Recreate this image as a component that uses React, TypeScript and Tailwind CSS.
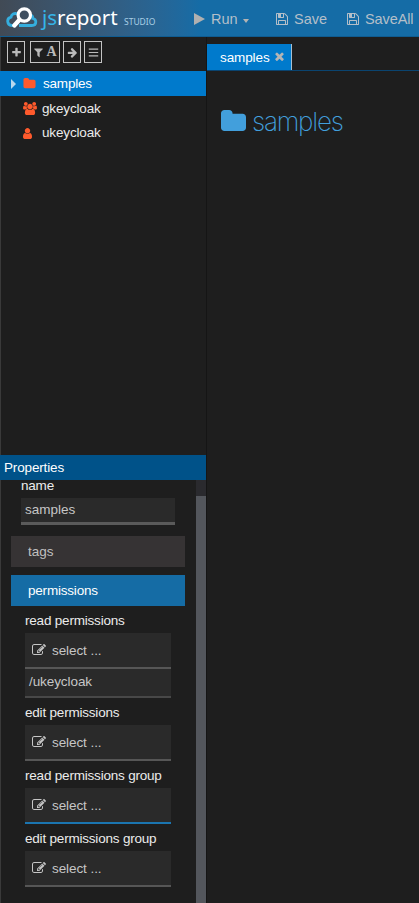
import React from "react";

const PATHS = {
  floppy:
    "M512 1536h768v-384h-768v384zm896 0h128v-896q0-14-10-38.5t-20-34.5l-281-281q-10-10-34-20t-39-10v416q0 40-28 68t-68 28h-576q-40 0-68-28t-28-68v-416h-128v1280h128v-416q0-40 28-68t68-28h832q40 0 68 28t28 68v416zm-384-928v-320q0-13-9.5-22.5t-22.5-9.5h-192q-13 0-22.5 9.5t-9.5 22.5v320q0 13 9.5 22.5t22.5 9.5h192q13 0 22.5-9.5t9.5-22.5zm640 32v928q0 40-28 68t-68 28h-1344q-40 0-68-28t-28-68v-1344q0-40 28-68t68-28h928q40 0 88 20t76 48l280 280q28 28 48 76t20 88z",
  edit:
    "M888 1184l116-116-152-152-116 116v56h96v96h56zm440-720q-16-16-33 1l-350 350q-17 17-1 33t33-1l350-350q17-17 1-33zm80 594v190q0 119-84.5 203.5t-203.5 84.5h-832q-119 0-203.5-84.5t-84.5-203.5v-832q0-119 84.5-203.5t203.5-84.5h832q63 0 117 25 15 7 18 23 3 17-9 29l-49 49q-14 14-32 8-23-6-45-6h-832q-66 0-113 47t-47 113v832q0 66 47 113t113 47h832q66 0 113-47t47-113v-126q0-13 9-22l64-64q15-15 35-7t20 29zm-96-738l288 288-672 672h-288v-288zm444 132l-92 92-288-288 92-92q28-28 68-28t68 28l152 152q28 28 28 68t-28 68z",
  folder:
    "M1728 608v704q0 92-66 158t-158 66h-1216q-92 0-158-66t-66-158v-960q0-92 66-158t158-66h320q92 0 158 66t66 158v32h672q92 0 158 66t66 158z",
  plus:
    "M1600 736v192q0 40-28 68t-68 28h-416v416q0 40-28 68t-68 28h-192q-40 0-68-28t-28-68v-416h-416q-40 0-68-28t-28-68v-192q0-40 28-68t68-28h416v-416q0-40 28-68t68-28h192q40 0 68 28t28 68v416h416q40 0 68 28t28 68z",
  filter:
    "M1595 295q17 41-14 70l-493 493v742q0 42-39 59-13 5-25 5-27 0-45-19l-256-256q-19-19-19-45v-486l-493-493q-31-29-14-70 17-39 59-39h1280q42 0 59 39z",
  arrow:
    "M1600 960q0 54-37 91l-651 651q-39 37-91 37-51 0-90-37l-75-75q-38-38-38-91t38-91l293-293h-704q-52 0-84.5-37.5t-32.5-90.5v-128q0-53 32.5-90.5t84.5-37.5h704l-293-294q-38-36-38-90t38-90l75-75q38-38 90-38 53 0 91 38l651 651q37 35 37 90z",
  bars: "M128 256h1536v190h-1536zM128 801h1536v190h-1536zM128 1346h1536v190h-1536z",
  times:
    "M1490 1322q0 40-28 68l-136 136q-28 28-68 28t-68-28l-294-294-294 294q-28 28-68 28t-68-28l-136-136q-28-28-28-68t28-68l294-294-294-294q-28-28-28-68t28-68l136-136q28-28 68-28t68 28l294 294 294-294q28-28 68-28t68 28l136 136q28 28 28 68t-28 68l-294 294 294 294q28 28 28 68z",
  user:
    "M1536 1399q0 109-62.5 187t-150.5 78h-854q-88 0-150.5-78t-62.5-187q0-85 8.5-160.5t31.5-152 58.5-131 94-89 134.5-34.5q131 128 313 128t313-128q76 0 134.5 34.5t94 89 58.5 131 31.5 152 8.5 160.5zm-256-887q0 159-112.5 271.5t-271.5 112.5-271.5-112.5-112.5-271.5 112.5-271.5 271.5-112.5 271.5 112.5 112.5 271.5z",
  users:
    "M593 896q-162 5-265 128h-134q-82 0-138-40.5t-56-118.5q0-353 124-353 6 0 43.5 21t97.5 42.5 119 21.5q67 0 133-23-5 37-5 66 0 143 81 277zm1071 637q0 120-73 189.5t-194 69.5h-874q-121 0-194-69.5t-73-189.5q0-53 3.5-103.5t14-109 26.5-108.5 43-97.5 62-81 85.5-53.5 111.5-20q10 0 43 21.5t73 48 107 48 135 21.5 135-21.5 107-48 73-48 43-21.5q61 0 111.5 20t85.5 53.5 62 81 43 97.5 26.5 108.5 14 109 3.5 103.5zm-1024-1277q0 106-75 181t-181 75-181-75-75-181 75-181 181-75 181 75 75 181zm704 384q0 159-112.5 271.5t-271.5 112.5-271.5-112.5-112.5-271.5 112.5-271.5 271.5-112.5 271.5 112.5 112.5 271.5zm576 225q0 78-56 118.5t-138 40.5h-134q-103-123-265-128 81-134 81-277 0-29-5-66 66 23 133 23 59 0 119-21.5t97.5-42.5 43.5-21q124 0 124 353zm-128-609q0 106-75 181t-181 75-181-75-75-181 75-181 181-75 181 75 75 181z",
};

type IconName = keyof typeof PATHS;

function Icon({ name, className, box = "0 0 1792 1792" }: { name: IconName; className: string; box?: string }) {
  return (
    <svg viewBox={box} fill="currentColor" className={`shrink-0 ${className}`}>
      <path d={PATHS[name]} />
    </svg>
  );
}

function Logo() {
  return (
    <div className="flex h-full w-[155px] shrink-0 items-start pl-[6px]">
      <svg viewBox="0 0 32 24" className="mt-[6px] h-6 w-8 shrink-0" fill="none">
        <path
          d="M7 19.500H5.800a4.200 4.200 0 0 1-.8-8.300C5.500 8.300 8 6.800 11.500 7.800M23.500 9c2.400 0 3.500 1.500 3.300 3.500 2 .4 3 1.600 3 3.200 0 2.300-1.600 3.800-4 3.800H13"
          stroke="#35aede"
          strokeWidth="2.800"
        />
        <circle cx="18.300" cy="9" r="6.200" stroke="#fff" strokeWidth="3.200" />
        <path d="M13.300 14 8.300 19.400" stroke="#fff" strokeWidth="4.400" strokeLinecap="round" />
      </svg>
      <div className="ml-[4px] flex items-baseline whitespace-nowrap font-['Noto_Sans',sans-serif] leading-[35px] text-white">
        <span className="w-[77px] text-[20.500px]">
          <span className="text-[#35b5e8]">js</span>report
        </span>
        <span className="ml-[5px] text-[8.500px] text-[#a9cfe6]">STUDIO</span>
      </div>
    </div>
  );
}

function Header() {
  return (
    <header className="flex h-[37px] shrink-0 overflow-hidden border-b border-[#0f5c91] bg-linear-to-r from-[#414a55] via-[#156ca6] via-[200px] to-[#156ca6] text-[14.500px] text-[#b4bfc9]">
      <Logo />
      <div className="flex h-9 items-center whitespace-nowrap pt-[2px]">
        <span className="ml-[39px] h-0 w-0 border-y-[6.500px] border-l-[11.500px] border-y-transparent border-l-[#b0b0b0]" />
        <span className="ml-[6px] w-[26px]">Run</span>
        <span className="ml-[6px] mt-[3px] h-0 w-0 border-x-[3.500px] border-t-[4px] border-x-transparent border-t-[#b4b4b4]" />
        <Icon name="floppy" className="ml-[26px] size-[14px]" />
        <span className="ml-[5px] w-[32px]">Save</span>
        <Icon name="floppy" className="ml-[20px] size-[14px]" />
        <span className="ml-[5px] tracking-[-0.100px]">SaveAll</span>
      </div>
    </header>
  );
}

function ToolButton({ className, children }: { className: string; children: React.ReactNode }) {
  return (
    <div className={`flex h-[22px] items-center justify-center border border-[#c4c4c4] text-[#bababa] ${className}`}>
      {children}
    </div>
  );
}

function Select({ active = false }: { active?: boolean }) {
  return (
    <div
      className={`flex h-9 w-[146px] items-center border-b-[2.500px] bg-[#2a2a2a] pl-[7px] pt-px text-[#c6c6c6] ${
        active ? "border-[#1b75b0]" : "border-[#565656]"
      }`}
    >
      <Icon name="edit" className="mb-[2px] size-[14px]" />
      <span className="ml-[6px] tracking-[-0.080px]">select ...</span>
    </div>
  );
}

function Label({ children }: { children: React.ReactNode }) {
  return (
    <div className="flex h-[27px] items-center whitespace-nowrap pt-[2px] tracking-[-0.200px] text-[#ececec]">
      {children}
    </div>
  );
}

function Properties() {
  return (
    <section className="flex h-[448px] flex-col">
      <div className="flex h-[25px] shrink-0 items-center bg-[#005289] pl-1 tracking-[-0.150px] text-white">
        Properties
      </div>
      <div className="flex min-h-0 flex-1">
        <div className="w-[196px]">
          <div className="h-[18px] pl-[21px] leading-[11px] tracking-[-0.200px] text-[#ececec]">name</div>
          <div className="ml-[21px] flex h-[27px] w-[154px] items-center border-b-[3px] border-[#5a5a5a] bg-[#2a2a2a] pl-[4px] text-[#c6c6c6]">
            samples
          </div>
          <div className="ml-[11px] mt-[11px] flex h-[31px] w-[174px] items-center bg-[#363334] pl-[17px] text-[#c0c0c0]">
            tags
          </div>
          <div className="ml-[11px] mt-[8px] flex h-[31px] w-[174px] items-center bg-[#156ca5] pl-[17px] tracking-[-0.200px] text-white">
            permissions
          </div>
          <div className="ml-[25px]">
            <Label>read permissions</Label>
            <Select />
            <div className="flex h-[29px] w-[146px] items-center border-b-2 border-[#484848] bg-[#2a2a2a] pl-[4px] pb-[2px] tracking-[-0.080px] text-[#c6c6c6]">
              /ukeycloak
            </div>
            <Label>edit permissions</Label>
            <Select />
            <Label>read permissions group</Label>
            <Select active />
            <Label>edit permissions group</Label>
            <Select />
          </div>
        </div>
        <div className="w-[10px] bg-[#2a2a2e] pt-4">
          <div className="h-full bg-[#53565c]" />
        </div>
      </div>
    </section>
  );
}

export default function App() {
  return (
    <div className="flex h-[903px] w-[419px] flex-col overflow-hidden bg-[#1e1e1e] font-['Liberation_Sans',Arial,sans-serif] text-[13.500px] leading-4">
      <Header />
      <div className="flex min-h-0 flex-1">
        <aside className="flex w-[206px] shrink-0 flex-col border-l border-[#3a3a3a]">
          <div className="flex h-[34px] shrink-0 pl-[6px] pt-[4px]">
            <ToolButton className="w-[18px]">
              <Icon name="plus" className="size-[11px]" />
            </ToolButton>
            <ToolButton className="ml-[5px] w-[30px] gap-[2px]">
              <Icon name="filter" className="size-[11px]" />
              <span className="font-['Liberation_Serif',serif] text-[14px] font-bold">A</span>
            </ToolButton>
            <ToolButton className="ml-[3px] w-[18px]">
              <Icon name="arrow" className="size-[11px]" />
            </ToolButton>
            <ToolButton className="ml-[3px] w-[18px]">
              <Icon name="bars" className="size-[11px]" />
            </ToolButton>
          </div>
          <div className="min-h-0 flex-1 text-[#ececec]">
            <div className="-ml-px flex h-[25px] items-center bg-[#007acc] text-white">
              <span className="ml-[11px] h-0 w-0 border-y-[5px] border-l-[5px] border-y-transparent border-l-[#b9d9ee]" />
              <Icon name="folder" className="ml-[7px] size-[13px] text-[#ff5a2c]" />
              <span className="ml-[7px] tracking-[-0.200px]">samples</span>
            </div>
            <div className="flex h-[25px] items-center">
              <Icon name="users" box="0 0 1920 1792" className="ml-[22px] h-[13px] w-[14px] text-[#ff5a2c]" />
              <span className="ml-[5px] tracking-[-0.150px]">gkeycloak</span>
            </div>
            <div className="flex h-6 items-center">
              <Icon name="user" box="256 128 1280 1536" className="ml-[22px] h-[11px] w-[9px] text-[#ff5a2c]" />
              <span className="ml-[10px] tracking-[-0.150px]">ukeycloak</span>
            </div>
          </div>
          <div className="-ml-px">
            <Properties />
          </div>
        </aside>
        <main className="min-w-0 flex-1 border-l border-[#151515]">
          <div className="flex h-[34px] items-end border-b border-[#0a4470]">
            <div className="flex h-[26px] w-[85px] items-center border-r border-[#a8bfd0] bg-[#007acc] pl-[13px] pt-px text-white">
              <span className="w-[50px] tracking-[-0.100px]">samples</span>
              <Icon name="times" box="302 302 1188 1252" className="mb-[2px] ml-[5px] size-[9px] text-[#b5b5b5]" />
            </div>
          </div>
          <div className="flex h-[100px] items-center pl-[14px] text-[#429fdc]">
            <Icon name="folder" box="64 0 1664 1792" className="h-[27px] w-[25px]" />
            <h1 className="ml-[6px] pt-px font-['Inter',sans-serif] text-[26px] font-[250] leading-8 tracking-[-1.200px]">
              samples
            </h1>
          </div>
        </main>
      </div>
    </div>
  );
}
